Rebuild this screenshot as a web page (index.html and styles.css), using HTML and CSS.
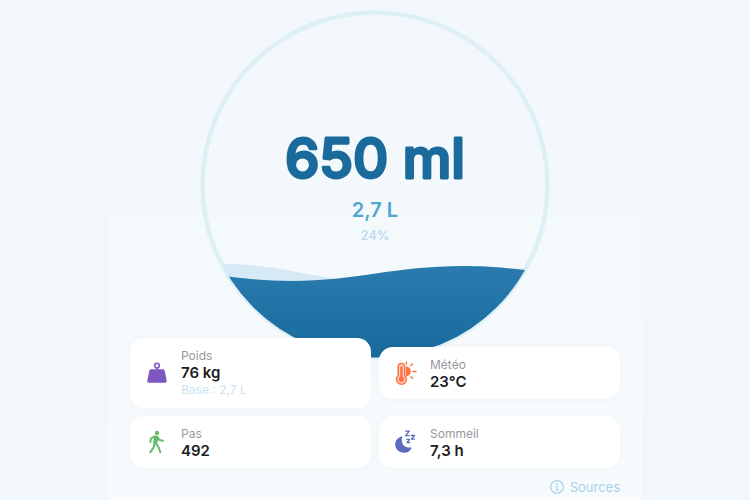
FILE: index.html
```html
<!DOCTYPE html>
<html lang="fr">
<head>
  <meta charset="UTF-8">
  <meta name="viewport" content="width=device-width, initial-scale=1.0">
  <title>Hydratation</title>
  <link rel="stylesheet" href="styles.css">
</head>
<body>
  <main class="panel">
    <section class="gauge">
      <svg class="gauge-art" viewBox="0 0 350 350" aria-hidden="true">
        <defs>
          <linearGradient id="water" x1="0" y1="0" x2="0" y2="1">
            <stop offset="0" stop-color="#2a7bae"/>
            <stop offset="1" stop-color="#176a9b"/>
          </linearGradient>
          <clipPath id="bowl"><circle cx="175" cy="175" r="172.5"/></clipPath>
        </defs>
        <circle cx="175" cy="175" r="172.5" fill="none" stroke="#deeff6" stroke-width="4.5"/>
        <g clip-path="url(#bowl)">
          <path fill="#d5eaf5" d="M0 254 C60 252 88 261 125 267 C190 278 250 262 350 256 V350 H0 Z"/>
          <path fill="url(#water)" d="M0 263 C30 267 60 271 92 271 C155 271 195 256 263 256 C290 256 308 258 350 263 V350 H0 Z"/>
        </g>
      </svg>
      <div class="gauge-text">
        <svg class="amount" viewBox="0 0 220 80" role="img" aria-label="650 ml">
          <text x="110" y="59" text-anchor="middle">650 ml</text>
        </svg>
        <div class="goal">2,7 L</div>
        <div class="percent">24%</div>
      </div>
    </section>

    <section class="cards">
      <div class="card">
        <svg class="icon weight" viewBox="0 0 24 24" aria-hidden="true">
          <circle cx="12" cy="4.6" r="2.4" fill="none" stroke="currentColor" stroke-width="1.5"/>
          <path fill="currentColor" d="M11.2 6.6h1.6v2.2h-1.6z"/>
          <path fill="currentColor" d="M6.2 8.2h11.6c1 0 1.7.6 1.9 1.5l2 10c.2 1.2-.5 2-1.6 2H3.9c-1.1 0-1.8-.8-1.6-2l2-10c.2-.9.9-1.5 1.9-1.5z"/>
        </svg>
        <div>
          <div class="label">Poids</div>
          <div class="value">76 kg</div>
          <div class="note">Base : 2,7 L</div>
        </div>
      </div>

      <div class="card">
        <svg class="icon weather" viewBox="0 0 24 24" aria-hidden="true">
          <path fill="#ffd5c8" stroke="currentColor" stroke-width="1.5" d="M4.2 14.6V5.7a3.2 3.2 0 0 1 6.4 0v8.9a4.9 4.9 0 1 1-6.4 0z"/>
          <circle cx="7.4" cy="18.3" r="2.7" fill="currentColor"/>
          <path stroke="currentColor" stroke-width="2.4" stroke-linecap="round" d="M7.4 6.5v11.5"/>
          <path fill="currentColor" d="M11.8 5.4a5 5 0 0 1 0 10z"/>
          <path stroke="currentColor" stroke-width="1.5" stroke-linecap="round" d="M12.4 1.2v1.7M16.900 4.500l1.500-1.500M18.800 10.400h3.200M16.900 15.700l1.500 1.500"/>
        </svg>
        <div>
          <div class="label">Météo</div>
          <div class="value">23°C</div>
        </div>
      </div>

      <div class="card">
        <svg class="icon walk" viewBox="0 0 24 24" aria-hidden="true">
          <circle cx="12" cy="2.9" r="2.2" fill="currentColor"/>
          <path fill="currentColor" d="M8.7 5.8h4l1 1.8-1.6 6.2H8.4z"/>
          <path fill="none" stroke="currentColor" stroke-width="2" stroke-linecap="round" stroke-linejoin="round" d="M9.2 6.6 6 8.5 5.3 12M12.7 7.3l1.6 2.6 3.6.8M9.6 13.5 8.5 17.7 5.2 22.3M11 13.5l2.7 4 1.6 4.8"/>
        </svg>
        <div>
          <div class="label">Pas</div>
          <div class="value">492</div>
        </div>
      </div>

      <div class="card">
        <svg class="icon sleep" viewBox="0 0 24 24" aria-hidden="true">
          <path fill="currentColor" d="M8.2 7.2C6.4 13 10.1 18.3 16.6 17.4c.7-.1 1.2.3.8 1C16 21 13.3 22.8 10.1 22.8 5.1 22.8 1.2 19.3 1.2 14.6c0-3.400 2.200-6.500 5.800-8 .8-.4 1.400 0 1.200.6z"/>
          <path fill="none" stroke="currentColor" stroke-width="1.3" stroke-linejoin="round" stroke-linecap="round" d="M11.6 1.2h3.7l-3.7 4.5h3.7M17.4 5.500h3.100l-3.100 3.600h3.100M13 9.300h2.600L13 12.500h2.600"/>
        </svg>
        <div>
          <div class="label">Sommeil</div>
          <div class="value">7,3 h</div>
        </div>
      </div>
    </section>

    <a class="sources" href="#sources">
      <svg viewBox="0 0 14 14" aria-hidden="true">
        <circle cx="7" cy="7" r="6.3" fill="none" stroke="currentColor" stroke-width="1.2"/>
        <circle cx="7" cy="4" r=".9" fill="currentColor"/>
        <path fill="none" stroke="currentColor" stroke-width="1.1" d="M5.6 6.2h1.5v4M5.4 10.2h3.3"/>
      </svg>
      Sources
    </a>
  </main>
</body>
</html>
```

FILE: styles.css
```css
* {
  box-sizing: border-box;
}

body {
  margin: 0;
  min-height: 100vh;
  background: #f1f7fb;
  font-family: Inter, 'Liberation Sans', sans-serif;
}

.panel {
  max-width: 534px;
  min-height: 100vh;
  margin: 0 auto;
  padding: 10px 22px 0;
  background: linear-gradient(#f1f7fb, #f7fbfd);
  display: flex;
  flex-direction: column;
}

/* drawing and text share one grid cell */
.gauge {
  display: grid;
  width: 100%;
  max-width: 350px;
  align-self: center;
}

.gauge-art,
.gauge-text {
  grid-area: 1 / 1;
}

.gauge-art {
  display: block;
  width: 100%;
}

.gauge-text {
  display: flex;
  flex-direction: column;
  align-items: center;
  padding-top: 110px;
}

.amount {
  width: 220px;
  height: 78px;
}

.amount text {
  font-size: 56px;
  font-weight: 500;
  fill: #1a6b9c;
  stroke: #1a6b9c;
  stroke-width: 3px;
  stroke-linejoin: round;
}

.goal {
  font-size: 20px;
  line-height: 24px;
  font-weight: 600;
  color: #4fa6cf;
}

.percent {
  margin-top: 3px;
  font-size: 13px;
  line-height: 20px;
  font-weight: 500;
  color: #b5dbec;
}

/* cards overlap the bottom of the gauge */
.cards {
  position: relative;
  display: grid;
  grid-template-columns: 1fr 1fr;
  gap: 8px;
  align-items: center;
  margin-top: -22px;
}

.card {
  display: flex;
  align-items: center;
  gap: 12px;
  padding: 9px 15px;
  background: #fff;
  border-radius: 14px;
  box-shadow: 0 1px 6px rgba(40, 100, 140, 0.04);
}

.icon {
  width: 24px;
  height: 24px;
  flex: none;
}

.weight { color: #7e57c2; }
.weather { color: #ff7043; }
.walk { color: #66bb6a; }
.sleep { color: #5c6bc0; }

.label {
  font-size: 12px;
  line-height: 17px;
  color: #98989d;
}

.value {
  font-size: 15px;
  line-height: 17px;
  font-weight: 600;
  color: #1c1c1e;
}

.note {
  font-size: 12px;
  line-height: 18px;
  color: #c8e4f2;
}

.sources {
  display: flex;
  align-items: center;
  align-self: flex-end;
  gap: 6px;
  margin-top: 10px;
  font-size: 13px;
  line-height: 18px;
  color: #a5d3e8;
  text-decoration: none;
}

.sources svg {
  width: 14px;
  height: 14px;
}
```
